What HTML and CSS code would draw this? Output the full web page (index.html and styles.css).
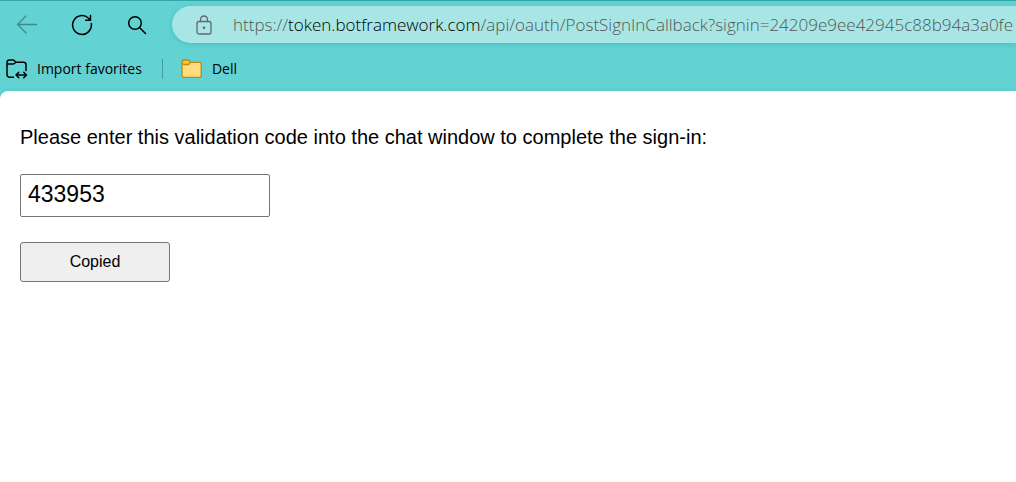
FILE: index.html
```html
<!DOCTYPE html>
<html lang="en">
<head>
<meta charset="utf-8">
<title>Sign-in validation</title>
<link rel="stylesheet" href="styles.css">
</head>
<body>
<header class="browser">
  <div class="toolbar">
    <button class="tool tool-back" type="button" aria-label="Back" disabled>
      <svg width="22" height="22" viewBox="0 0 22 22"><path d="M20.500 10.500H1.500M10 2L1.500 10.500l8.500 8.500"/></svg>
    </button>
    <button class="tool" type="button" aria-label="Refresh">
      <svg class="bold" width="22" height="22" viewBox="0 0 22 22"><path d="M20.300 9.500A9.400 9.400 0 1 1 17.500 4.200L19.500 6.300M19.500 1.500v4.800H14.700"/></svg>
    </button>
    <button class="tool" type="button" aria-label="Search">
      <svg class="bold" width="22" height="22" viewBox="0 0 22 22"><circle cx="9" cy="9" r="6.300"/><path d="M13.500 13.500L19.500 19.500"/></svg>
    </button>
    <div class="address">
      <svg class="lock" width="16" height="20" viewBox="0 0 16 20"><rect x="1" y="6.500" width="14" height="12.500" rx="2"/><path d="M4.500 6.500V4.500a3.500 3.500 0 0 1 7 0v2"/><circle class="dot" cx="8" cy="12.700" r="1.300"/></svg>
      <div class="url" role="textbox" aria-label="Address" contenteditable="true" spellcheck="false">https://<span class="host">token.botframework.com</span>/api/oauth/PostSignInCallback?signin=24209e9ee42945c88b94a3a0fe</div>
    </div>
  </div>
  <nav class="favorites" aria-label="Favorites">
    <button class="favorite" type="button">
      <svg class="bold" width="22" height="20" viewBox="0 0 22 20"><path d="M7.500 18.200H3.500A2.500 2.500 0 0 1 1 15.700V3.500Q1 1 3.500 1H7.500L10 3.300H17.500Q20 3.300 20 5.800V11.500M1 4.300Q1 5 3 5H7Q8 5 10 3.300M10 16H20.500M12.800 13.200L10 16l2.800 2.800M17.700 13.200L20.500 16l-2.800 2.800"/></svg>
      <span>Import favorites</span>
    </button>
    <span class="divider"></span>
    <button class="favorite" type="button">
      <svg class="folder" width="22" height="20" viewBox="0 0 22 20"><rect x="1" y="3.300" width="19.200" height="15" rx="2"/><path class="tab" d="M3 1H7.500L9.500 3.300 7.500 5.500H3Q1 5.500 1 3.200 1 1 3 1Z"/></svg>
      <span>Dell</span>
    </button>
  </nav>
</header>
<main class="page">
  <label class="prompt" for="code">Please enter this validation code into the chat window to complete the sign-in:</label>
  <input class="code" id="code" type="text" value="433953" readonly>
  <button class="copy" type="button">Copied</button>
</main>
</body>
</html>
```
FILE: styles.css
```css
* {
  box-sizing: border-box;
}

body {
  margin: 0;
  min-height: 100vh;
  display: flex;
  flex-direction: column;
  overflow-x: hidden;
  background: #62d2d2;
  color: #000;
  font-family: "Liberation Sans", Arial, sans-serif;
}

button {
  color: inherit;
  font: inherit;
}

svg {
  flex: none;
  fill: none;
  stroke: currentColor;
  stroke-width: 1.3;
  stroke-linecap: round;
  stroke-linejoin: round;
}

.bold {
  stroke-width: 1.5;
}

.browser {
  border-top: 1px solid #33a4a8;
  font-family: "Segoe UI", "Open Sans", "Noto Sans", sans-serif;
}

.toolbar {
  display: flex;
  align-items: center;
  gap: 33px;
  padding: 5px 0 4px 16px;
}

.tool {
  display: flex;
  padding: 0;
  border: 0;
  background: none;
}

.tool-back {
  color: #3f8a8b;
}

.address {
  flex: 1;
  min-width: 0;
  height: 37px;
  margin-left: -9px;
  padding-left: 24px;
  display: flex;
  align-items: center;
  gap: 21px;
  overflow: hidden;
  border-radius: 19px 0 0 19px;
  background: #a8e6e5;
  box-shadow: 0 1px 5px #4bbabb;
  color: #666;
}

.dot {
  fill: currentColor;
  stroke: none;
}

.url {
  flex: 1;
  min-width: 0;
  overflow: hidden;
  white-space: nowrap;
  color: #505757;
  font-size: 17px;
  font-weight: 300;
  line-height: 24px;
  outline: 0;
}

.host {
  color: #000;
}

.favorites {
  display: flex;
  align-items: center;
  gap: 18px;
  height: 44px;
  padding-left: 6px;
}

.favorite {
  display: flex;
  align-items: center;
  gap: 9px;
  padding: 0;
  border: 0;
  background: none;
  font-size: 14px;
  line-height: 20px;
}

.divider {
  width: 1px;
  height: 20px;
  margin-left: 2px;
  background: #469c9d;
}

.folder {
  fill: #ffdc7c;
  stroke: #b88a18;
}

.tab {
  fill: #fcc630;
}

.page {
  flex: 1;
  display: flex;
  flex-direction: column;
  align-items: flex-start;
  padding: 34px 20px;
  border-top-left-radius: 8px;
  background: #fff;
  box-shadow: 0 0 3px #4bbabb;
}

.prompt {
  font-size: 20px;
  line-height: 24px;
}

.code {
  width: 250px;
  height: 43px;
  margin-top: 25px;
  padding: 0 7px 3px;
  border: 1px solid #767676;
  border-radius: 2px;
  background: #fff;
  color: #000;
  font: inherit;
  font-size: 23px;
}

.copy {
  width: 150px;
  height: 40px;
  margin-top: 25px;
  border: 1px solid #767676;
  border-radius: 3px;
  background: #efefef;
  font-size: 16px;
}
```
